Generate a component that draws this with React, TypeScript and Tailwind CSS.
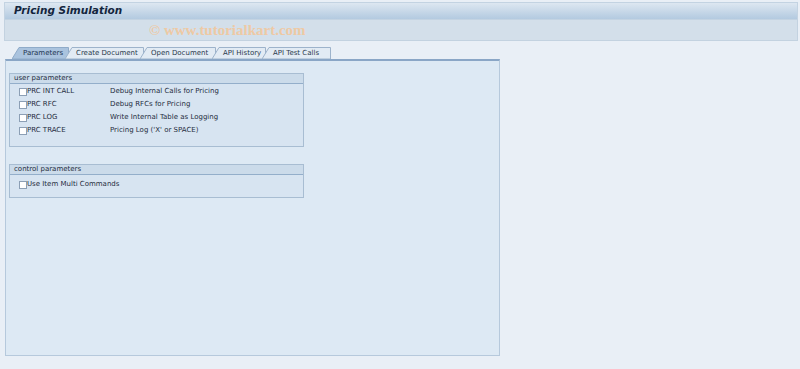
import React from "react";

const font = { fontFamily: "Tahoma, 'DejaVu Sans', 'Liberation Sans', sans-serif" };

function Tab({ label, active, w }: { label: string; active?: boolean; w: number }) {
  return (
    <div className="relative h-[12px] flex items-center -ml-[4px]" style={{ width: w }}>
      <svg className="absolute inset-0" width={w} height={12} viewBox={`0 0 ${w} 12`} preserveAspectRatio="none">
        <path
          d={`M0 12 L7 0.5 L${w - 0.5} 0.5 L${w - 0.5} 12 Z`}
          fill={active ? "#aac3de" : "#e2ebf4"}
          stroke={active ? "#8fabc9" : "#9db3cb"}
          strokeWidth={1}
        />
      </svg>
      <span className={`relative pl-[11px] text-[7px] leading-none whitespace-nowrap ${active ? "text-[#1d3450]" : "text-[#2a3a4c]"}`}>{label}</span>
    </div>
  );
}

function Row({ label, desc }: { label: string; desc?: string }) {
  return (
    <div className="flex items-center h-[13px]">
      <div className="w-[8px] h-[8px] bg-white border border-[#8c9fb5] ml-[9px]" />
      <span className={`${desc ? "w-[83px]" : ""} whitespace-nowrap text-[7px] text-[#1f2d3d] leading-none`}>{label}</span>
      {desc && <span className="whitespace-nowrap text-[7px] text-[#1f2d3d] leading-none">{desc}</span>}
    </div>
  );
}

export default function App() {
  return (
    <div className="w-[800px] h-[369px] bg-[#e9eff6] relative overflow-hidden" style={font}>
      <div className="pt-[2px] pl-[4px] pr-[2px]">
        <div className="h-[18px] border border-[#c3d3e2] bg-gradient-to-b from-[#dde7f1] to-[#b3cae0] flex items-center pl-[9px]">
          <span className="text-[10.5px] font-bold italic text-[#13253d]" style={{ fontFamily: "Tahoma, 'DejaVu Sans', sans-serif" }}>
            Pricing Simulation
          </span>
        </div>
        <div className="h-[21px] bg-[#d3dfea] border border-t-0 border-[#c3d2e0] flex items-center pl-[144px]">
          <span className="text-[15px] font-bold text-[#eec9a4] whitespace-nowrap" style={{ fontFamily: "'Liberation Serif', serif" }}>
            © www.tutorialkart.com
          </span>
        </div>
      </div>
      <div className="pl-[16px] pt-[6px] flex">
        <Tab label="Parameters" active w={57} />
        <Tab label="Create Document" w={79} />
        <Tab label="Open Document" w={76} />
        <Tab label="API History" w={54} />
        <Tab label="API Test Calls" w={69} />
      </div>
      <div className="ml-[5px] w-[495px] h-[297px] bg-[#dde9f4] border border-[#b6c9dc] border-t-2 border-t-[#8aa6c6] pt-[12px] pl-[3px]">
        <div className="w-[295px] h-[74px] border border-[#a8bdd2] bg-[#d7e4f1]">
          <div className="h-[10px] bg-[#cbdbea] border-b border-[#93aeca] flex items-center pl-[4px]">
            <span className="text-[7px] text-[#1f2d3d] leading-none">user parameters</span>
          </div>
          <div className="pt-[1px]">
            <Row label="PRC INT CALL" desc="Debug Internal Calls for Pricing" />
            <Row label="PRC RFC" desc="Debug RFCs for Pricing" />
            <Row label="PRC LOG" desc="Write Internal Table as Logging" />
            <Row label="PRC TRACE" desc="Pricing Log ('X' or SPACE)" />
          </div>
        </div>
        <div className="mt-[17px] w-[295px] h-[34px] border border-[#a8bdd2] bg-[#d7e4f1]">
          <div className="h-[10px] bg-[#cbdbea] border-b border-[#93aeca] flex items-center pl-[4px]">
            <span className="text-[7px] text-[#1f2d3d] leading-none">control parameters</span>
          </div>
          <div className="pt-[3px]">
            <Row label="Use Item Multi Commands" />
          </div>
        </div>
      </div>
    </div>
  );
}
